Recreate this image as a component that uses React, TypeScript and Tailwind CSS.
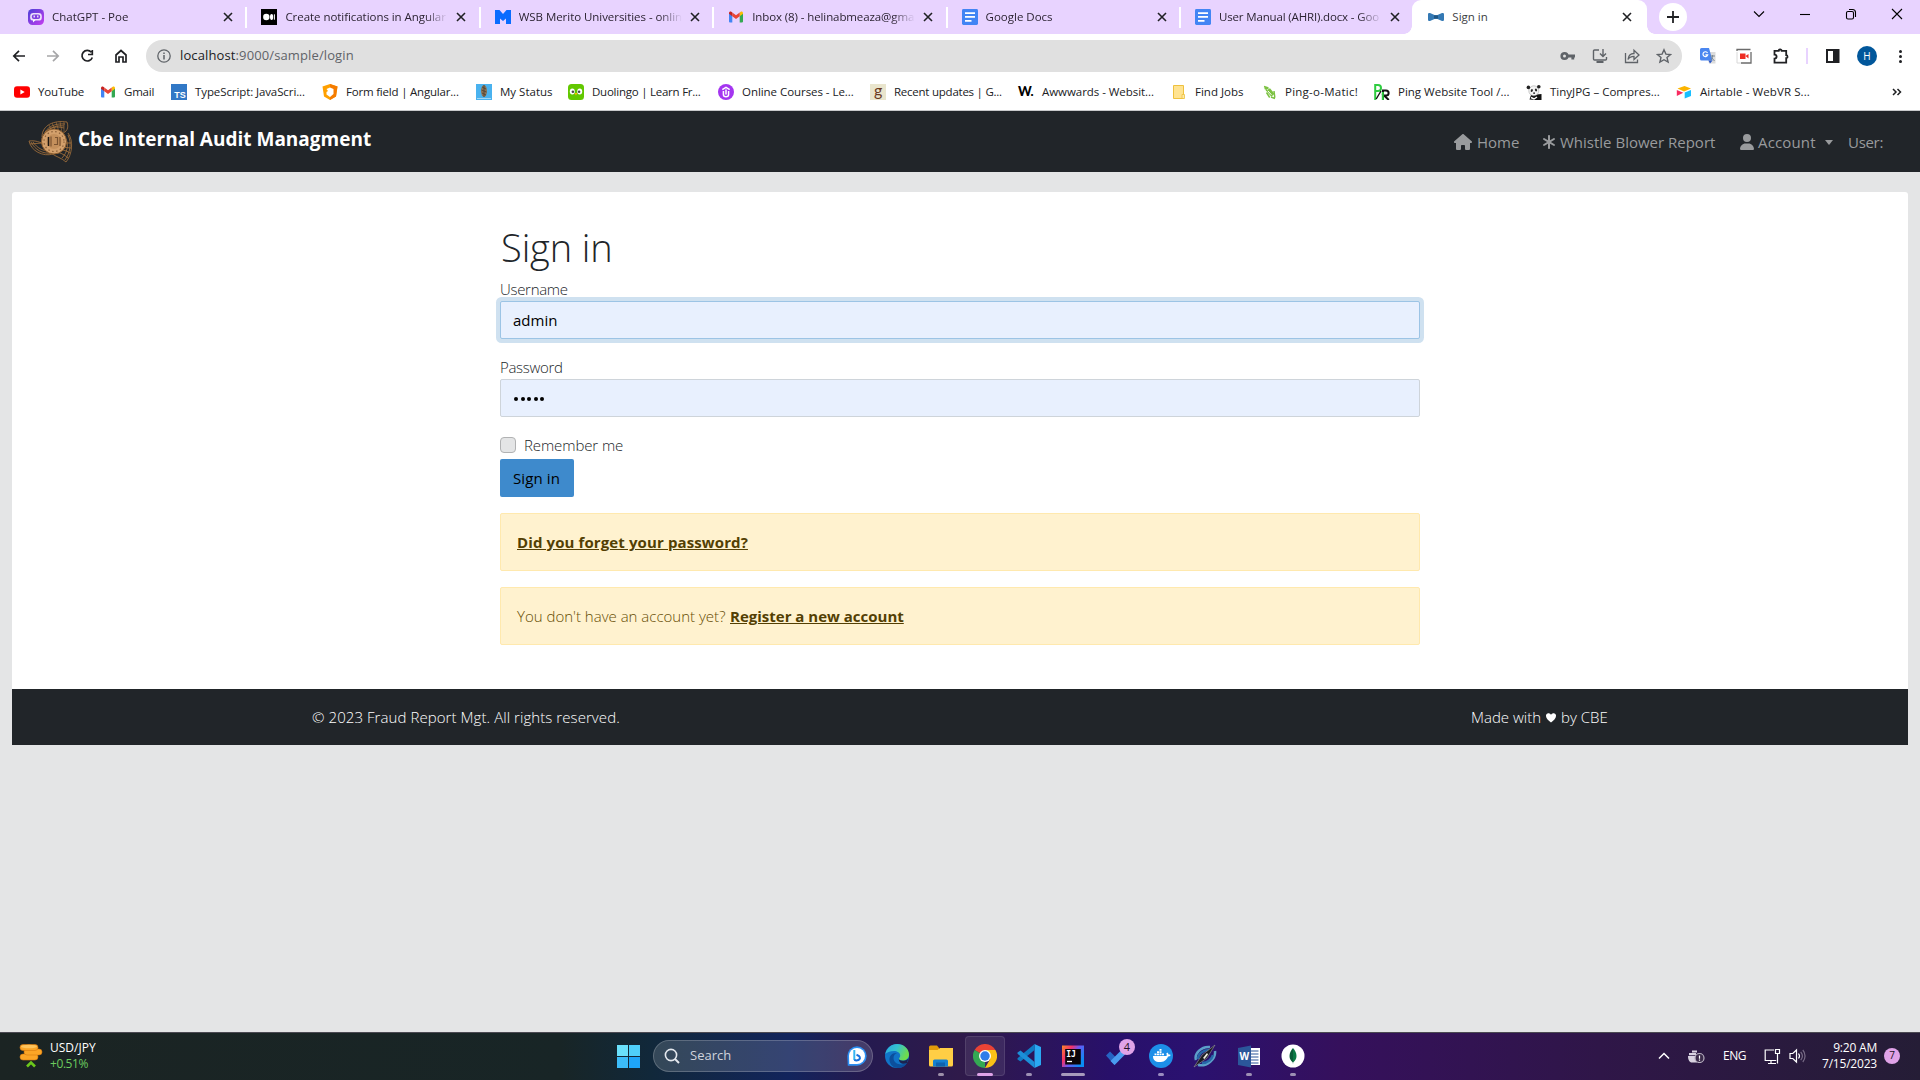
import type { ReactNode } from 'react';
import { FaAsterisk, FaHouse, FaUser } from 'react-icons/fa6';

/* ---------- small brand icons ---------- */

const PoeIcon = () => (
  <svg viewBox="0 0 16 16" className="size-4">
    <defs>
      <linearGradient id="poe" x1="0" y1="0" x2="1" y2="1">
        <stop offset="0" stopColor="#4a3fd6" />
        <stop offset="1" stopColor="#c63df0" />
      </linearGradient>
    </defs>
    <rect width="16" height="16" rx="4.500" fill="url(#poe)" />
    <rect x="2.200" y="4" width="11.600" height="7.600" rx="3.200" fill="#fff" fillOpacity=".85" />
    <rect x="3.800" y="5.600" width="8.400" height="4.400" rx="2" fill="#7f3fe0" />
    <path d="M6.200 6.600v1.800M9.800 6.600v1.800" stroke="#fff" strokeWidth="1.200" />
    <path d="M5 11v2.600L7.600 11z" fill="#fff" />
  </svg>
);

const MediumIcon = () => (
  <svg viewBox="0 0 16 16" className="size-4">
    <rect width="16" height="16" fill="#000" />
    <circle cx="5.300" cy="8" r="3.200" fill="#fff" />
    <ellipse cx="10.600" cy="8" rx="1.600" ry="3" fill="#fff" />
    <rect x="12.900" y="5.300" width="1" height="5.400" fill="#fff" />
  </svg>
);

const MeritoIcon = () => (
  <svg viewBox="0 0 16 16" className="size-4">
    <path d="M0 1h4.500L8 5l3.500-4H16v14h-5V9.500L8 12 5 9.500V15H0z" fill="#0a6cff" />
  </svg>
);

const GmailIcon = () => (
  <svg viewBox="0 0 16 16" className="size-4">
    <path d="M1 4v8.600c0 .5.4.9.9.9h2.400V6.600z" fill="#4285f4" />
    <path d="M11.700 13.500h2.400c.5 0 .9-.4.9-.9V4l-3.300 2.600z" fill="#34a853" />
    <path d="M11.700 3.400v3.900L15 4.800V3.900c0-1.200-1.400-1.900-2.300-1.200z" fill="#fbbc04" />
    <path d="M4.300 7.300V3.400L8 6.200l3.700-2.800v3.900L8 10.100z" fill="#ea4335" />
    <path d="M1 3.900v.9l3.300 2.500V3.400l-1-.7C2.400 2 1 2.700 1 3.900z" fill="#c5221f" />
  </svg>
);

const DocsIcon = () => (
  <svg viewBox="0 0 16 16" className="size-4">
    <rect width="16" height="16" rx="1.400" fill="#4285f4" />
    <path d="M3 4.200h10M3 7.800h10M3 11.800h6.500" stroke="#fff" strokeWidth="1.700" />
  </svg>
);

const BowtieIcon = () => (
  <svg viewBox="0 0 16 16" className="size-4">
    <path d="M0 5.500c0-1.300 1-1.700 2-1.400l4.500 1.800h3L14 4.100c1-.3 2 .1 2 1.400v5c0 1.300-1 1.700-2 1.400l-4.500-1.800h-3L2 11.900c-1 .3-2-.1-2-1.400z" fill="#3479b4" />
    <path d="M6 6.500h4v3H6z" fill="#1f5583" />
  </svg>
);

const YouTubeIcon = () => (
  <svg viewBox="0 0 16 16" className="size-4">
    <rect y="2.200" width="16" height="11.600" rx="3" fill="#f00" />
    <path d="M6.400 5.500v5l4.300-2.500z" fill="#fff" />
  </svg>
);

const TsIcon = () => (
  <svg viewBox="0 0 16 16" className="size-4">
    <rect width="16" height="16" fill="#3178c6" />
    <text x="3.300" y="14.300" fontFamily="Liberation Sans" fontWeight="700" fontSize="9" fill="#fff">TS</text>
  </svg>
);

const AngularShield = () => (
  <svg viewBox="0 0 16 16" className="size-4">
    <path d="M8 0l7.500 2.500L14 12.500 8 16 2 12.500.5 2.500z" fill="#ffa000" />
    <path d="M8 0l7.500 2.500L14 12.500 8 16z" fill="#f57c00" />
    <path d="M8 3.500l3.500 1.500v5L8 13l-3.500-2.500V8l1.500-1-1.500-2z" fill="#fff" />
  </svg>
);

const StatusIcon = () => (
  <svg viewBox="0 0 16 16" className="size-4">
    <rect width="16" height="16" fill="#49b2ef" />
    <ellipse cx="8" cy="7" rx="3" ry="6" fill="#8b7355" />
    <path d="M6 3l4 2M5.500 6l5 2M6 9l4 2M8 1v12" stroke="#4b4032" strokeWidth=".8" />
    <path d="M1 14.500h14" stroke="#b9e2f8" strokeWidth=".8" />
  </svg>
);

const DuoIcon = () => (
  <svg viewBox="0 0 16 16" className="size-4">
    <rect width="16" height="16" rx="3.500" fill="#62c800" />
    <ellipse cx="4.300" cy="7.600" rx="2.500" ry="3" fill="#fff" />
    <ellipse cx="11.700" cy="7.600" rx="2.500" ry="3" fill="#fff" />
    <circle cx="4.900" cy="7.800" r="1.300" fill="#4b4b4b" />
    <circle cx="11.100" cy="7.800" r="1.300" fill="#4b4b4b" />
    <path d="M6.600 9h2.800L8 11.600z" fill="#ffb800" />
  </svg>
);

const UdemyIcon = () => (
  <svg viewBox="0 0 16 16" className="size-4">
    <circle cx="8" cy="8" r="8" fill="#a435f0" />
    <path d="M4.300 5.600 8 3.300l3.700 2.300M5.400 7v3.500c0 3 5.200 3 5.200 0V7M8 5.500v5" fill="none" stroke="#fff" strokeWidth="1.500" />
  </svg>
);

const GoodreadsIcon = () => (
  <span className="flex size-4 items-center justify-center bg-[#e9e5cd] pb-[3px] font-['Lato'] text-[16px] leading-none text-[#6b3a1e]">g</span>
);

const AwwwardsIcon = () => (
  <span className="flex h-4 w-4 items-center font-['Lato'] text-[13px] font-black leading-none tracking-[-0.5px] text-black">W.</span>
);

const FolderNote = () => (
  <svg viewBox="0 0 16 16" className="size-4">
    <path d="M2.500 1.500h10v13h-10z" fill="#ffe391" stroke="#eec13e" />
    <path d="M11 10.500h2.500v4H11z" fill="#ffe9a8" stroke="#eec13e" strokeWidth=".8" />
  </svg>
);

const PingIcon = () => (
  <svg viewBox="0 0 16 16" className="size-4">
    <path d="M3 2.500l4.500 1.300M3.500 4.500l4-.2M4 3l1.800 4" stroke="#7cc242" strokeWidth="1.400" />
    <path d="M5 6.500l4-2.200 4.500 5.400-3.200 3z" fill="#7cc242" />
    <path d="M5.500 8.500l3.200 5M13 7l.8 6.500M10 13l4 1.500" stroke="#7cc242" strokeWidth="1.500" />
    <path d="M6.800 6.800l3.600 4" stroke="#fff" strokeWidth="1" />
  </svg>
);

const PrIcon = () => (
  <svg viewBox="0 0 16 16" className="size-4">
    <path d="M1.200 16V1H4c4 0 4 6 0 6H2" fill="none" stroke="#2ecc40" strokeWidth="2" />
    <path d="M7 7 2.200 15" stroke="#111" strokeWidth="1.400" />
    <path d="M9 16V6.500h3c3.500 0 3.500 5 0 5h-2l4.800 4.500" fill="none" stroke="#111" strokeWidth="2" />
    <path d="M8.800 8v8" stroke="#2ecc40" strokeWidth="2" />
  </svg>
);

const PandaIcon = () => (
  <svg viewBox="0 0 16 16" className="size-4">
    <path d="M5 11l-1.500 4.500L9 16h6.500V10z" fill="#111" />
    <circle cx="7.800" cy="6.800" r="5" fill="#f4f4f4" stroke="#999" strokeWidth=".5" />
    <circle cx="2.400" cy="3.400" r="1.800" fill="#222" />
    <circle cx="12.800" cy="2.800" r="1.800" fill="#222" />
    <ellipse cx="5.800" cy="6.500" rx="1" ry="1.500" fill="#222" transform="rotate(25 5.800 6.500)" />
    <ellipse cx="10" cy="6" rx="1" ry="1.500" fill="#222" transform="rotate(-25 10 6)" />
    <path d="M7.200 9.200h1.800" stroke="#111" strokeWidth="1.200" />
    <path d="M5 13.500l3 1.500 3-2" stroke="#fff" strokeWidth="1.500" fill="none" />
  </svg>
);

const AirtableIcon = () => (
  <svg viewBox="0 0 16 16" className="size-4">
    <path d="M1.500 4.600 8.500 2l6.500 2.600-7 2.800z" fill="#fcb400" />
    <path d="M8.700 8.500 15 6v6l-6.300 2.500z" fill="#18bfff" />
    <path d="M.8 6l6.500 2.700L.8 12z" fill="#f82b60" />
  </svg>
);

/* ---------- browser chrome ---------- */

const CloseX = () => (
  <svg viewBox="0 0 12 12" className="size-3 shrink-0">
    <path d="M2 2l8 8M10 2l-8 8" stroke="#202124" strokeWidth="1.600" />
  </svg>
);

type Item = { icon: ReactNode; label: string; cls: string };

const tabs: Item[] = [
  { icon: <PoeIcon />, label: 'ChatGPT - Poe', cls: '' },
  { icon: <MediumIcon />, label: 'Create notifications in Angular', cls: 'tracking-[-0.05px]' },
  { icon: <MeritoIcon />, label: 'WSB Merito Universities - onlin', cls: 'tracking-[-0.05px]' },
  { icon: <GmailIcon />, label: 'Inbox (8) - helinabmeaza@gma', cls: 'tracking-[-0.1px]' },
  { icon: <DocsIcon />, label: 'Google Docs', cls: '' },
  { icon: <DocsIcon />, label: 'User Manual (AHRI).docx - Goo', cls: 'tracking-[-0.15px]' },
];

const TabStrip = () => (
  <div className="flex h-[34px] bg-[#e8d3ff] pl-[14px]">
    {tabs.map((t, i) => (
      <div key={t.label} className="flex w-[233.4px] shrink-0 items-center pl-[14px]">
        {t.icon}
        <span
          className={`ml-2 w-[163px] whitespace-nowrap text-[11.5px] text-[#2c2433] [mask-image:linear-gradient(to_right,black_86%,transparent)] ${t.cls}`}
        >
          {t.label}
        </span>
        <span className="ml-[7px] flex">
          <CloseX />
        </span>
        {i < 5 && <span className="ml-auto h-[21px] w-[2px] bg-white" />}
      </div>
    ))}
    <div className="relative -ml-[2px] flex w-[235px] shrink-0 items-center rounded-t-[9px] bg-white pl-4">
      <span className="absolute -left-2 bottom-0 size-2 bg-[radial-gradient(circle_at_0_0,transparent_7.500px,white_8px)]" />
      <span className="absolute -right-2 bottom-0 size-2 bg-[radial-gradient(circle_at_100%_0,transparent_7.500px,white_8px)]" />
      <BowtieIcon />
      <span className="ml-2 w-[157px] text-[11.5px] text-[#3c4043]">Sign in</span>
      <span className="ml-3 flex">
        <CloseX />
      </span>
    </div>
    <div className="ml-3 mt-[3px] flex size-7 items-center justify-center rounded-full bg-white">
      <svg viewBox="0 0 14 14" className="size-[14px]">
        <path d="M7 1v12M1 7h12" stroke="#202124" strokeWidth="1.800" />
      </svg>
    </div>
    <div className="ml-auto mr-[17px] flex h-7 items-center gap-[34px] text-black">
      {['M1 3.500l5 5 5-5', 'M1 6.500h10', 'M1.500 5a1.500 1.500 0 0 1 1.500-1.500h4A1.500 1.500 0 0 1 8.500 5v4.500A1.500 1.500 0 0 1 7 11H3a1.500 1.500 0 0 1-1.500-1.500zM4 1.500h3.500A3 3 0 0 1 10.500 4.500V9', 'M1 1l10 10M11 1L1 11'].map((d) => (
        <svg key={d} viewBox="0 0 12 12" className="size-3" fill="none" stroke="currentColor" strokeWidth="1.100">
          <path d={d} />
        </svg>
      ))}
    </div>
  </div>
);

const Toolbar = () => (
  <div className="flex h-[44px] items-center bg-white pl-3">
    <div className="flex w-[134px] items-center gap-5 text-[#202124]">
      {['M13 7H2M7 1.800 1.800 7 7 12.200', 'M1 7h11M7 1.800 12.200 7 7 12.200', 'M11.300 3.200a5.300 5.300 0 1 0 1 5.300M12.300 1v4.500H8', 'M2 13V6l5-4.500L12 6v7H9V8H5v5z'].map((d, i) => (
        <svg key={d} viewBox="0 0 14 14" className={`size-[14px] ${i === 1 ? 'text-[#a6a6a8]' : ''}`} fill="none" stroke="currentColor" strokeWidth="1.700">
          <path d={d} />
        </svg>
      ))}
    </div>
    <div className="flex h-8 w-[1536px] shrink-0 items-center rounded-full bg-[#e0e0e0] pl-[11px] pr-[10px] text-[#5f6368]">
      <svg viewBox="0 0 14 14" className="size-[14px]" fill="none" stroke="currentColor" strokeWidth="1.300">
        <circle cx="7" cy="7" r="6.200" />
        <path d="M7 6v4.500M7 3.500V5" strokeWidth="1.500" />
      </svg>
      <span className="ml-[9px] text-[13px] tracking-[0.12px] text-[#5f6368]">
        <span className="text-[#202124]">localhost</span>:9000/sample/login
      </span>
      <div className="ml-auto flex items-center gap-4">
        <svg viewBox="0 0 16 16" className="size-4" fill="none" stroke="currentColor" strokeWidth="2">
          <circle cx="4.500" cy="8" r="2.800" strokeWidth="2.600" />
          <path d="M7 8h8M12.800 8v3.500" strokeWidth="2.800" />
        </svg>
        <svg viewBox="0 0 16 16" className="size-4" fill="none" stroke="currentColor" strokeWidth="1.400">
          <path d="M7 2H2.500a1 1 0 0 0-1 1v8a1 1 0 0 0 1 1h11a1 1 0 0 0 1-1V9M11 1v7M8 5.500l3 3 3-3" />
          <path d="M4.500 14h7" strokeWidth="2" />
        </svg>
        <svg viewBox="0 0 16 16" className="size-4" fill="none" stroke="currentColor" strokeWidth="1.300">
          <path d="M1.500 5v9.500h12v-3M4 11.500C4.500 7 7 5.500 10 5.500V2.200l5 4.800-5 4.500V8.300c-3 0-4.800.9-6 3.200z" />
        </svg>
        <svg viewBox="0 0 16 16" className="size-4" fill="none" stroke="currentColor" strokeWidth="1.400">
          <path d="M8 1.800l1.900 4.300 4.600.4-3.500 3 1.100 4.600L8 11.700l-4.100 2.400L5 9.500l-3.500-3 4.600-.4z" />
        </svg>
      </div>
    </div>
    <svg viewBox="0 0 16 16" className="ml-[18px] size-4 shrink-0">
      <path d="M6 4h9.500v11.500H9z" fill="#dcdcdc" />
      <path d="M0 1.500A1.500 1.500 0 0 1 1.500 0H9l3.500 12.500h-11A1.500 1.500 0 0 1 0 11z" fill="#4a86f0" />
      <path d="M8.500 12.500h4L10 15.500z" fill="#2a56c6" />
      <path d="M7.500 5A2.400 2.400 0 1 0 7.700 6.800H5.400" fill="none" stroke="#fff" strokeWidth="1.200" />
      <path d="M10.500 8h4.500M12.600 7v1c0 2-.8 3.500-2 4.500M11.500 9.500l3 3.500" stroke="#77838c" strokeWidth=".9" fill="none" />
    </svg>
    <svg viewBox="0 0 16 16" className="ml-5 size-4 shrink-0" fill="none">
      <path d="M1 3V1.500h13.500M15 4v11H5" stroke="#6b6b6b" strokeWidth="1.300" />
      <path d="M1 4v11h4" stroke="#d8d8d8" />
      <path d="M4 5.500h5.500v5.500H4zM9.500 8 12.500 6v4.500z" fill="#ee2d24" />
    </svg>
    <svg viewBox="0 0 16 16" className="ml-[21px] size-4 shrink-0" fill="none" stroke="#202124" strokeWidth="1.800">
      <path d="M1.500 2.800h4.200a1.500 1.300 0 0 1 3 0h4.500v4.400a1.300 1.500 0 0 1 0 3v4.400H1.500v-4c2.800 0 2.800-4 0-4z" />
    </svg>
    <span className="ml-[17px] h-4 w-[2px] shrink-0 bg-[#e8d3ff]" />
    <svg viewBox="0 0 16 16" className="ml-[17px] size-4 shrink-0">
      <path d="M2 2h11.500v12H2z" fill="none" stroke="#202124" strokeWidth="2" />
      <path d="M8 2h6v12H8z" fill="#202124" />
    </svg>
    <span className="ml-4 flex size-5 shrink-0 items-center justify-center rounded-full bg-[#01579b] text-[10px] text-white">H</span>
    <div className="ml-[22px] flex flex-col gap-[2px]">
      <span className="size-[3px] rounded-full bg-[#202124]" />
      <span className="size-[3px] rounded-full bg-[#202124]" />
      <span className="size-[3px] rounded-full bg-[#202124]" />
    </div>
  </div>
);

const bookmarks: Item[] = [
  { icon: <YouTubeIcon />, label: 'YouTube', cls: 'w-[86px] tracking-[-0.17px]' },
  { icon: <GmailIcon />, label: 'Gmail', cls: 'w-[71px] tracking-[-0.2px]' },
  { icon: <TsIcon />, label: 'TypeScript: JavaScri...', cls: 'w-[151px] tracking-[-0.1px]' },
  { icon: <AngularShield />, label: 'Form field | Angular...', cls: 'w-[154px] tracking-[-0.2px]' },
  { icon: <StatusIcon />, label: 'My Status', cls: 'w-[92px]' },
  { icon: <DuoIcon />, label: 'Duolingo | Learn Fr...', cls: 'w-[150px] tracking-[-0.24px]' },
  { icon: <UdemyIcon />, label: 'Online Courses - Le...', cls: 'w-[152px] tracking-[-0.05px]' },
  { icon: <GoodreadsIcon />, label: 'Recent updates | G...', cls: 'w-[148px] tracking-[-0.24px]' },
  { icon: <AwwwardsIcon />, label: 'Awwwards - Websit...', cls: 'w-[153px] tracking-[-0.05px]' },
  { icon: <FolderNote />, label: 'Find Jobs', cls: 'w-[90px]' },
  { icon: <PingIcon />, label: 'Ping-o-Matic!', cls: 'w-[113px] tracking-[0.25px]' },
  { icon: <PrIcon />, label: 'Ping Website Tool /...', cls: 'w-[152px]' },
  { icon: <PandaIcon />, label: 'TinyJPG – Compres...', cls: 'w-[150px]' },
  { icon: <AirtableIcon />, label: 'Airtable - WebVR S...', cls: 'w-[150px] tracking-[0.1px]' },
];

const BookmarksBar = () => (
  <div className="flex h-[33px] items-center border-b border-[#c8c9cb] bg-white pb-[5px] pl-[14px]">
    {bookmarks.map((b) => (
      <div key={b.label} className={`flex shrink-0 items-center gap-2 whitespace-nowrap text-[11.5px] text-[#202124] ${b.cls}`}>
        <span className="flex size-4 shrink-0">{b.icon}</span>
        {b.label}
      </div>
    ))}
    <svg viewBox="0 0 10 8" className="ml-auto mr-[18px] h-2 w-[10px]" fill="none" stroke="#202124" strokeWidth="1.500">
      <path d="M1 1l3 3-3 3M5.500 1l3 3-3 3" />
    </svg>
  </div>
);

/* ---------- application page ---------- */

const Logo = () => (
  <svg viewBox="0 0 45 45" className="size-[45px]" fill="none">
    <g stroke="#a8743c" strokeWidth=".8">
      <path d="M14 18C14 6 26 1 39 3c2 6 0 10-6 12M16 16C18 8 27 4 37 5M18 14c4-6 12-8 18-7M14 20C16 10 26 6 36 9" />
      <path d="M24 4l4 9M28 3l3 10M32 2.500l2 11M36 3l0 10M21 6l4 8" strokeWidth=".6" />
      <path d="M1 22c8-1 10 2 15 2M1 22c2 10 14 16 24 13M3 23c4 8 12 12 20 11M5 23c4 6 10 9 16 9M2 25l12-1" />
      <path d="M40 14c6 8 4 22-2 29M40 16c4 8 2 18-3 25M38 20c3 6 1 14-4 19M38 43c-4-4-10-5-15-9M40 39c-4-4-8-5-13-7M42 34c-4-3-8-3-12-4M43 29l-10-1M43 24l-8 0" />
    </g>
    <circle cx="26" cy="22.500" r="12.500" fill="#d3a06c" stroke="#8d5f30" />
    <circle cx="26" cy="22.500" r="10" stroke="#8a6038" strokeWidth="1.200" strokeDasharray="1.500 2.500" />
    <circle cx="26" cy="22.500" r="7.500" fill="#c4905c" />
    <path d="M23 17.500v10M27 18.500h2.500v7H26M32 18v9" stroke="#7b5330" strokeWidth="1.200" />
    <path d="M20.500 18v9" stroke="#1d1712" strokeWidth="1.500" />
  </svg>
);

const Navbar = () => (
  <nav className="flex h-[61px] items-center bg-[#212529] pl-[28px] pr-[36px] text-[15px] text-[#999b9d]">
    <Logo />
    <span className="mb-1 ml-[5px] whitespace-nowrap text-[19px] font-bold text-white">Cbe Internal Audit Managment</span>
    <div className="ml-auto flex items-center whitespace-nowrap pt-px">
      <FaHouse className="size-[18px]" />
      <span className="ml-[5px] w-[65px]">Home</span>
      <FaAsterisk className="h-4 w-[14px]" />
      <span className="ml-1 w-[180px]">Whistle Blower Report</span>
      <FaUser className="h-4 w-[14px]" />
      <span className="ml-1 w-[67px] tracking-[0.15px]">Account</span>
      <span className="border-x-[4.500px] border-t-[5px] border-x-transparent border-t-current" />
      <span className="ml-[15px] w-[36px] tracking-[-0.3px]">User:</span>
    </div>
  </nav>
);

const SignInCard = () => (
  <main className="h-[497px] rounded-t-[3px] bg-white px-[488px] pt-[31px] text-[15px] font-light leading-6 text-[#212529]">
    <h1 className="pl-px text-[38px] leading-[48px] tracking-[-0.1px]">Sign in</h1>
    <label className="mt-[6px] block h-6 tracking-[-0.3px]">Username</label>
    <div className="flex h-[38px] items-center rounded-[2px] border border-[#9cc4e5] bg-[#e8f0fe] pl-[12px] font-normal text-black ring-4 ring-[#cfe1f0]">
      admin
    </div>
    <label className="mt-4 block h-6 tracking-[-0.3px]">Password</label>
    <div className="flex h-[38px] items-center gap-[2.500px] rounded-[2px] border border-[#ced4da] bg-[#e8f0fe] pl-[13px] pt-px">
      {[0, 1, 2, 3, 4].map((n) => (
        <span key={n} className="size-1 rounded-full bg-black" />
      ))}
    </div>
    <div className="mt-4 flex h-6 items-center">
      <span className="size-4 rounded-[4px] border border-[#b1b2b3] bg-[#e4e5e6]" />
      <span className="ml-2 tracking-[-0.1px]">Remember me</span>
    </div>
    <button className="mt-[2px] flex h-[38px] w-[74px] items-center rounded-[2px] bg-[#3e8acc] pl-[13px] font-normal tracking-[0.1px] text-black">
      Sign in
    </button>
    <div className="mt-4 flex h-[58px] items-center rounded-[2px] border border-[#ffe9ae] bg-[#fff2cf] pl-4 text-[#533f03]">
      <a className="font-bold tracking-[0.11px] underline">Did you forget your password?</a>
    </div>
    <div className="mt-4 flex h-[58px] items-center rounded-[2px] border border-[#ffe9ae] bg-[#fff2cf] pl-4 text-[#664d03]">
      <span className="w-[213px] whitespace-nowrap">You don't have an account yet?</span>
      <a className="font-bold text-[#533f03] underline">Register a new account</a>
    </div>
  </main>
);

const Footer = () => (
  <footer className="flex h-[56px] items-center justify-between bg-[#212529] px-[300px] pt-px text-[15px] font-light text-white">
    <span className="tracking-[0.07px]">© 2023 Fraud Report Mgt. All rights reserved.</span>
    <span className="flex items-center">
      <span className="w-[75px]">Made with</span>
      <svg viewBox="0 0 10 10" className="h-[10px] w-[10px]" fill="#fff">
        <path d="M5 9.500C2.500 7.500 0 5.500 0 3a2.600 2.600 0 0 1 5-1.200A2.600 2.600 0 0 1 10 3c0 2.500-2.500 4.500-5 6.500z" />
      </svg>
      <span className="ml-[5px] w-[47px] whitespace-nowrap">by CBE</span>
    </span>
  </footer>
);

/* ---------- taskbar ---------- */

const EdgeIcon = () => (
  <svg viewBox="0 0 24 24" className="size-6">
    <defs>
      <linearGradient id="edgeTop" x1="0" y1="0" x2="1" y2=".4">
        <stop offset="0" stopColor="#2ba8e0" />
        <stop offset=".5" stopColor="#34c1d0" />
        <stop offset="1" stopColor="#6fdc4c" />
      </linearGradient>
    </defs>
    <circle cx="12" cy="12" r="12" fill="#1174c8" />
    <path d="M.3 10C1.500 4 6.500 0 12 0c7 0 12 5 12 10.500 0 3.500-2.500 6-6 6-2.500 0-4-.8-4-1.800 0-.7 1.200-1.200 1.200-3.200C15.200 8.500 12 7 9 7 5 7 1.500 8.500.3 10z" fill="url(#edgeTop)" />
    <path d="M8.500 14c0-2.500 1.500-4.500 3.500-5-5-.5-8 3-7.500 7.500.4 4 4 7.500 8.500 7.500 4 0 7.500-2 9-5-6 3-13.500 1-13.500-5z" fill="#0c4f9c" />
    <path d="M13.800 15c.3 1 2 1.700 4.200 1.700 2.800 0 4.500-1 5.500-2.500L22 19c-3 1.500-8 1-8.200-4z" fill="#1b2350" />
  </svg>
);

const ChromeIcon = () => (
  <svg viewBox="0 0 24 24" className="size-6">
    <path d="M12 12 1.600 6A12 12 0 0 1 22.400 6z" fill="#ea4335" />
    <path d="M12 12v12A12 12 0 0 1 1.600 6z" fill="#34a853" />
    <path d="M12 6h10.400A12 12 0 0 1 12 24l5.200-9z" fill="#fbc116" />
    <circle cx="12" cy="12" r="6" fill="#fff" />
    <circle cx="12" cy="12" r="4.700" fill="#2f7de9" />
  </svg>
);

const ExplorerIcon = () => (
  <svg viewBox="0 0 24 24" className="size-6">
    <path d="M0 3a1.500 1.500 0 0 1 1.500-1.500H8l2 2.500v4H0z" fill="#e09a0a" />
    <path d="M0 6h8.500L11 4h13v17a1.500 1.500 0 0 1-1.500 1.500h-21A1.500 1.500 0 0 1 0 21z" fill="#ffce45" />
    <path d="M4 22.500V17a1.500 1.500 0 0 1 1.500-1.500h12A1.500 1.500 0 0 1 19 17v5.500z" fill="#1580d0" />
    <path d="M7 18.500h9v4H7z" fill="#0f62ad" />
  </svg>
);

const VsCodeIcon = () => (
  <svg viewBox="0 0 24 24" className="size-6">
    <path d="M17.500 0 24 3v18l-6.500 3z" fill="#2aa9f2" />
    <path d="M17.500 0v6L3.500 17.500.5 15.500v-1.200z" fill="#0f7bc4" />
    <path d="M17.500 24v-6L3.500 6.500.5 8.500v1.200z" fill="#1c8fd8" />
  </svg>
);

const IntellijIcon = () => (
  <svg viewBox="0 0 24 24" className="size-6">
    <defs>
      <linearGradient id="ij" x1="0" y1="0" x2="1" y2=".6">
        <stop offset="0" stopColor="#fb8a26" />
        <stop offset=".35" stopColor="#f5316a" />
        <stop offset=".6" stopColor="#6b57f5" />
        <stop offset="1" stopColor="#0a8cf5" />
      </linearGradient>
    </defs>
    <rect x="1" y="1.500" width="22" height="21.500" fill="url(#ij)" />
    <rect x="4.200" y="5" width="15.600" height="15.500" fill="#0b0508" />
    <text x="5.300" y="12.800" fontFamily="DejaVu Sans Mono" fontWeight="700" fontSize="8" fill="#fff">IJ</text>
    <path d="M6 17.500h5" stroke="#fff" strokeWidth="1.300" />
  </svg>
);

const TodoIcon = () => (
  <svg viewBox="0 0 24 24" className="size-6">
    <path d="M1 11.500l4-4 9 9-4.500 4.500z" fill="#2564c4" />
    <path d="M5.500 17 17 5.500l4 4L9.500 21z" fill="#4a9cf0" />
  </svg>
);

const DockerIcon = () => (
  <svg viewBox="0 0 24 24" className="size-6">
    <circle cx="12" cy="12" r="12" fill="#1d8fe8" />
    <path d="M4 12h13.500c.3-1 .3-1.800-.2-2.600l1-.8c.8.6 1.200 1.300 1.300 2 .8-.2 1.500 0 2 .3-.4 1-1.300 1.500-2.600 1.500C17.500 16.500 14.500 18 10.500 18 6.500 18 4 16 4 12z" fill="#fff" />
    <path d="M5.500 9.500h2v1.800h-2zM8 9.500h2v1.800H8zM10.500 9.500h2v1.800h-2zM13 9.500h2v1.800h-2zM8 7.200h2V9H8zM10.500 7.200h2V9h-2zM10.500 5h2v1.800h-2z" fill="#fff" />
  </svg>
);

const DbToolIcon = () => (
  <svg viewBox="0 0 24 24" className="size-6" fill="none">
    <path d="M3 16C1 10 8 2 17 3M5 21c9 2 18-6 17-14" stroke="#5c9fc9" strokeWidth="2.500" />
    <path d="M5 15c0-5 5-9 11-9M9 19c6 0 10-4 11-8" stroke="#2668a8" strokeWidth="2.500" />
    <path d="M1 23 9 11 22 1l-8 13z" fill="#1c1c22" stroke="#8a8a90" strokeWidth=".7" />
    <path d="M10 14l4-5 1 1.500-3.500 4.500z" fill="#f2efe4" />
  </svg>
);

const WordIcon = () => (
  <svg viewBox="0 0 24 24" className="size-6">
    <path d="M12 4h11v17H12z" fill="#fff" />
    <path d="M14 7h7.500M14 10h7.500M14 13h7.500M14 16h7.500M14 19h7.500" stroke="#2b579a" strokeWidth="1.100" />
    <path d="M1 4 14 1.500v22L1 21z" fill="#2b579a" />
    <text x="2.500" y="16" fontFamily="Open Sans" fontWeight="700" fontSize="10" fill="#fff">W</text>
  </svg>
);

const MongoIcon = () => (
  <svg viewBox="0 0 24 24" className="size-6">
    <circle cx="12" cy="12" r="11.500" fill="#fff" />
    <path d="M12 4c2 2.500 3.500 4.500 3.500 8 0 2.800-1.300 4.700-3.200 6.200L12 20z" fill="#0b7a45" />
    <path d="M12 4c-2 2.500-3.500 4.500-3.500 8 0 2.800 1.300 4.700 3.200 6.200L12 20z" fill="#0a5c38" />
  </svg>
);

type TaskbarApp = { name: string; icon: ReactNode; mark: string; badge?: string; active?: boolean };

const apps: TaskbarApp[] = [
  { name: 'edge', icon: <EdgeIcon />, mark: 'w-0' },
  { name: 'explorer', icon: <ExplorerIcon />, mark: 'w-[6px] bg-[#9d90a8]' },
  { name: 'chrome', icon: <ChromeIcon />, mark: 'w-4 bg-[#e0a3e8]', active: true },
  { name: 'vscode', icon: <VsCodeIcon />, mark: 'w-[6px] bg-[#9d90b4]' },
  { name: 'intellij', icon: <IntellijIcon />, mark: 'w-6 bg-[#a79abc]' },
  { name: 'todo', icon: <TodoIcon />, mark: 'w-0', badge: '4' },
  { name: 'docker', icon: <DockerIcon />, mark: 'w-[6px] bg-[#9a8cc0]' },
  { name: 'dbtool', icon: <DbToolIcon />, mark: 'w-0' },
  { name: 'word', icon: <WordIcon />, mark: 'w-[6px] bg-[#9d90b4]' },
  { name: 'mongo', icon: <MongoIcon />, mark: 'w-[6px] bg-[#9d90b4]' },
];

const Taskbar = () => (
  <div className="flex h-12 items-center border-t border-[#4b4952] bg-[linear-gradient(to_right,#1b2423_0px,#182526_560px,#11283a_650px,#12245c_790px,#241a50_860px,#2f1a4a_960px,#28106a_1110px,#2a1170_1190px,#35105c_1340px,#2f1648_1600px,#251d36_1920px)] pb-px text-xs text-white">
    <div className="flex w-[617px] shrink-0 items-center pl-[19px]">
      <svg viewBox="0 0 24 26" className="h-[26px] w-6">
        <g fill="#fba526" stroke="#d9780e" strokeWidth=".6">
          <rect x="1" y="11" width="18" height="6" rx="3" />
          <rect x="5" y="6" width="18" height="6" rx="3" />
          <rect x="1" y="1.500" width="18" height="6" rx="3" />
        </g>
        <ellipse cx="10" cy="3.500" rx="8" ry="1.800" fill="#ffc45a" />
        <path d="M8 23.500l4-4 4 4" fill="none" stroke="#6cc81c" strokeWidth="2.600" />
      </svg>
      <div className="ml-[7px] leading-4">
        <div>USD/JPY</div>
        <div className="tracking-[-0.42px] text-[#6ccb5f]">+0.51%</div>
      </div>
    </div>
    <div className="grid size-[23px] shrink-0 grid-cols-2 gap-px">
      <span className="bg-[#6ae0fb]" />
      <span className="bg-[#4fcffa]" />
      <span className="bg-[#3cbcf9]" />
      <span className="bg-[#1ea4f8]" />
    </div>
    <div className="ml-[13px] flex h-8 w-[220px] shrink-0 items-center rounded-full border border-white/20 bg-white/15 pl-[10px] pr-[5px]">
      <svg viewBox="0 0 16 16" className="size-4" fill="none" stroke="#e4e8ee" strokeWidth="1.600">
        <circle cx="7" cy="7" r="5.600" />
        <path d="M11 11l4 4" strokeWidth="2" />
      </svg>
      <span className="ml-[10px] text-[13px] text-[#cfd3dc]">Search</span>
      <svg viewBox="0 0 20 20" className="ml-auto size-5">
        <path d="M.3 10a9.700 9.700 0 1 1 9.700 9.700H.8z" fill="#2b8df0" />
        <path d="M2 10a8 8 0 1 1 8 8H2.300z" fill="#fff" />
        <path d="M7.300 4v10" stroke="#35b6f2" strokeWidth="2" />
        <path d="M7.300 13.800c2.500 1.400 6.200 0 5.600-2.500-.3-1.400-1.700-2-3.400-2.600" fill="none" stroke="#1670dd" strokeWidth="2" />
      </svg>
    </div>
    <div className="ml-1 flex gap-1">
      {apps.map((a) => (
        <div
          key={a.name}
          className={`relative flex size-10 items-center justify-center rounded-[4px] ${a.active ? 'border border-white/10 bg-white/8' : ''}`}
        >
          {a.icon}
          <span className={`absolute h-[3px] rounded-full ${a.active ? '-bottom-px' : 'bottom-0'} ${a.mark}`} />
          {a.badge && (
            <span className="absolute top-[3px] left-[22px] flex size-4 items-center justify-center rounded-full bg-[#e0a3e8] text-[11px] text-[#1e1424]">
              {a.badge}
            </span>
          )}
        </div>
      ))}
    </div>
    <div className="ml-auto flex items-center pr-5">
      <svg viewBox="0 0 12 8" className="mr-[18px] h-2 w-3" fill="none" stroke="#fff" strokeWidth="1.500">
        <path d="M1 6.500l5-5 5 5" />
      </svg>
      <svg viewBox="0 0 17 14" className="mr-[18px] h-[14px] w-[17px]">
        <path d="M0 7h9v6.500H4C1.500 13.500 0 11 0 7zM1 4h7v2.300H1zM4 1.500h5V3.500H4z" fill="#d8d2e0" />
        <circle cx="11.500" cy="9" r="4.500" fill="#3a2a4a" stroke="#b9b2c2" strokeWidth="1.200" />
        <path d="M11.500 6.500v3.200M11.500 10.600v1.200" stroke="#fff" strokeWidth="1.200" />
      </svg>
      <span className="mr-[18px] w-[23px] tracking-[-0.48px]">ENG</span>
      <svg viewBox="0 0 17 17" className="mr-2 size-[17px]" fill="none" stroke="#fff" strokeWidth="1.200">
        <path d="M10 2H1.200v10.500h11M4 15.500h8M7 12.500v3M11.500 1.500h4v4h-4zM13.500 5.500v10" />
      </svg>
      <svg viewBox="0 0 17 16" className="mr-[13px] h-4 w-[17px]" fill="none" stroke="#fff" strokeWidth="1.200">
        <path d="M1 5.500h2.800L7.500 2v12l-3.700-3.500H1z" />
        <path d="M9.500 5.500c1.200 1.500 1.200 3.500 0 5" />
        <path d="M11.700 3.800c2 2.500 2 6 0 8.400M13.800 2c3 3.500 3 8.500 0 12" stroke="#786c86" />
      </svg>
      <div className="w-[58px] text-right leading-4 tracking-[-0.2px]">
        <div>9:20 AM</div>
        <div>7/15/2023</div>
      </div>
      <span className="ml-[7px] flex size-4 items-center justify-center rounded-full bg-[#e0a3e8] text-[10px] text-[#1e1424]">7</span>
    </div>
  </div>
);

export default function App() {
  return (
    <div className="flex h-[1080px] w-[1920px] flex-col overflow-hidden bg-[#e4e5e6] font-['Open_Sans','Noto_Sans',sans-serif]">
      <TabStrip />
      <Toolbar />
      <BookmarksBar />
      <Navbar />
      <div className="flex-1 px-3 pt-5">
        <SignInCard />
        <Footer />
      </div>
      <Taskbar />
    </div>
  );
}
